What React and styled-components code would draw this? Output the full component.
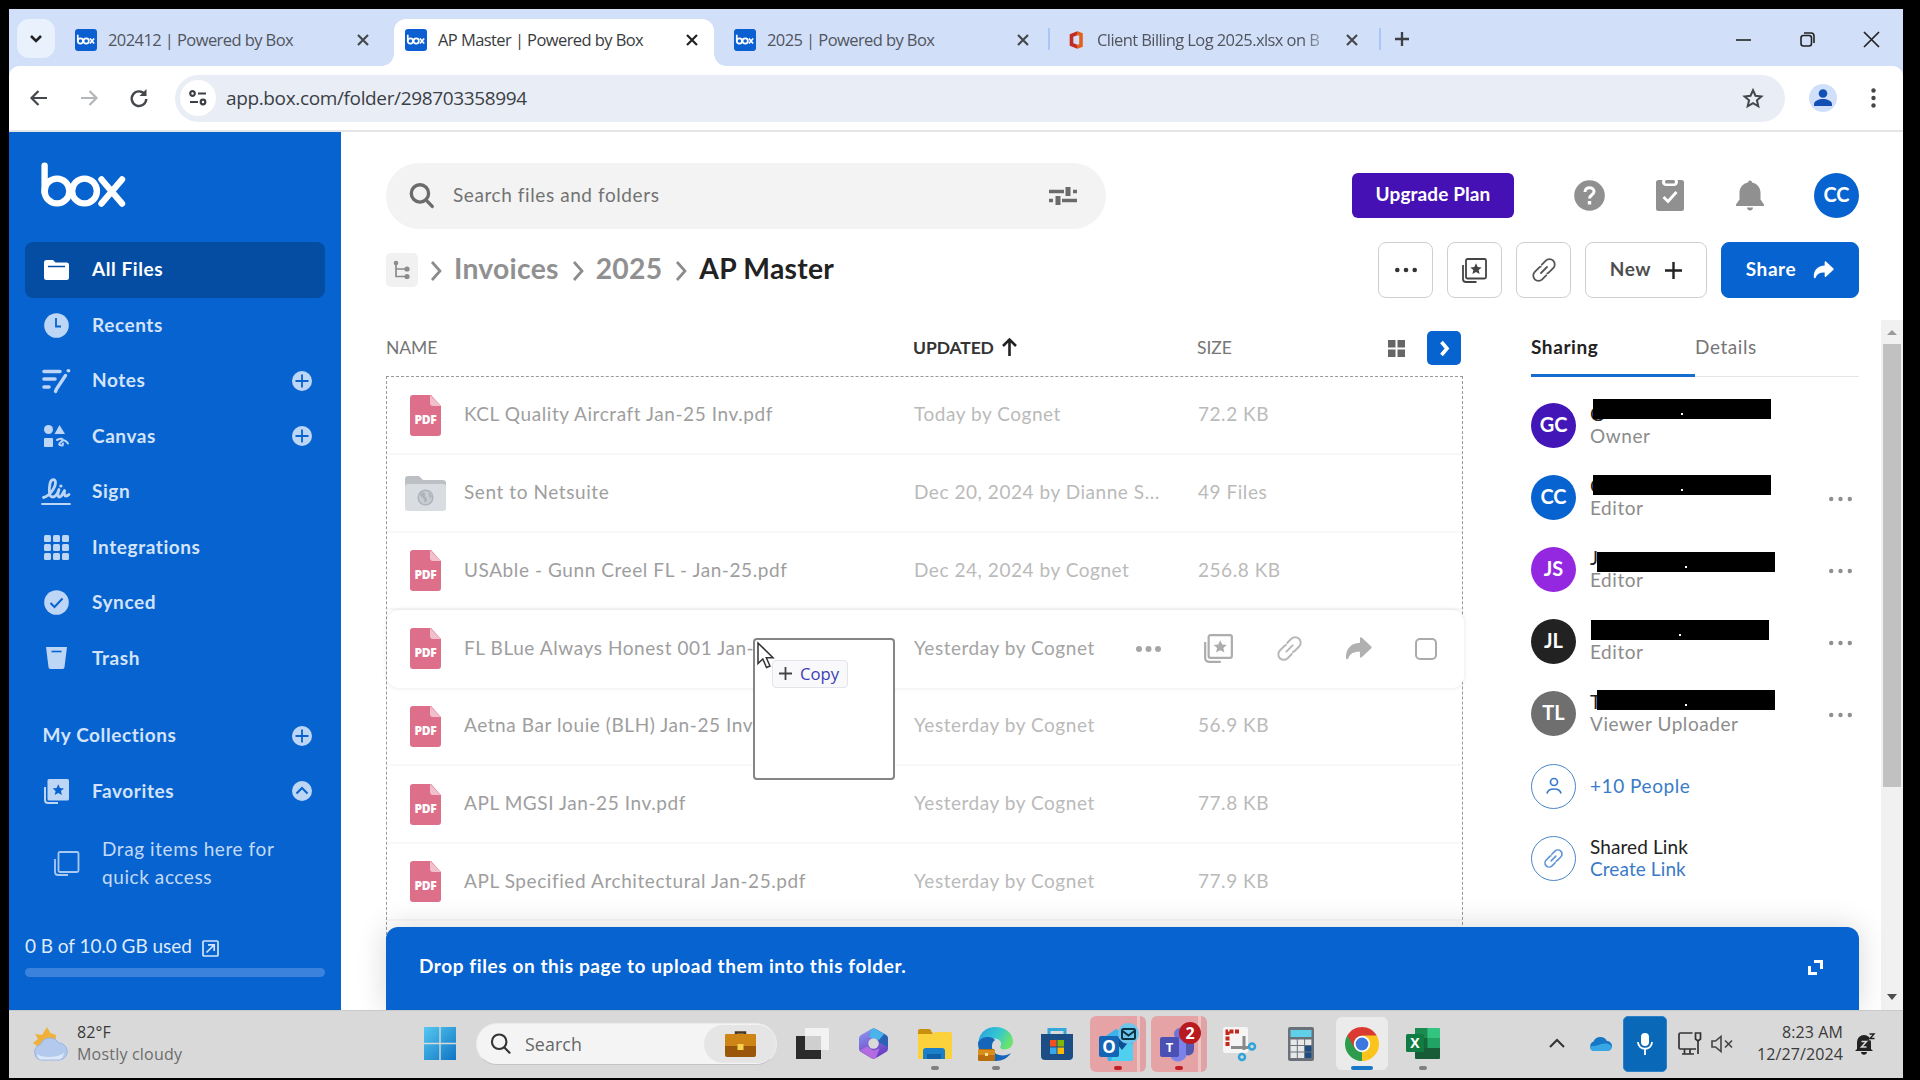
import React from 'react';
import styled, { createGlobalStyle, css } from 'styled-components';

const blue = '#0763cf';

const GlobalStyle = createGlobalStyle`
  * { box-sizing: border-box; }
  body { margin: 0; background: #000; overflow: hidden; }
  svg { display: block; flex: none; overflow: visible; }
`;

const Screen = styled.div`
  width: 1920px;
  height: 1080px;
  background: #000;
  padding: 9px 17px 2px 9px;
  display: flex;
  flex-direction: column;
  font-family: Lato, sans-serif;
  font-size: 19px;
  letter-spacing: 0.58px;
  color: #222;
  white-space: nowrap;
`;

/* ---------- browser chrome ---------- */
const TabStrip = styled.div`
  height: 57px;
  flex: none;
  background: #d2dff8;
  display: flex;
  align-items: flex-end;
  padding-left: 8px;
  font-family: 'Open Sans', sans-serif;
  font-size: 16.5px;
  letter-spacing: -0.58px;
`;
const TabSearch = styled.div`
  width: 38px;
  height: 39px;
  margin: 0 0 8px;
  border-radius: 12px;
  background: #e9f1fd;
  display: grid;
  place-items: center;
`;
const Tab = styled.div`
  position: relative;
  height: 47px;
  width: ${(p) => p.$w}px;
  margin-left: ${(p) => p.$gap || 0}px;
  padding: 0 ${(p) => p.$end || 17}px 6px 11px;
  display: flex;
  align-items: center;
  color: #50555e;
  ${(p) =>
    p.$active &&
    css`
      background: #fff;
      color: #3a3c40;
      border-radius: 12px 12px 0 0;
      &::before,
      &::after {
        content: '';
        position: absolute;
        bottom: 0;
        width: 12px;
        height: 12px;
      }
      &::before {
        left: -12px;
        background: radial-gradient(circle at 0 0, transparent 11.5px, #fff 12px);
      }
      &::after {
        right: -12px;
        background: radial-gradient(circle at 100% 0, transparent 11.5px, #fff 12px);
      }
    `}
`;
const TabTitle = styled.span`
  flex: 1;
  overflow: hidden;
  margin: 0 16px 0 ${(p) => (p.$fade ? 14 : 11)}px;
  ${(p) => p.$fade && css`mask-image: linear-gradient(90deg, #000 88%, transparent 101%);`}
`;
const TabRule = styled.i`
  width: 2px;
  height: 22px;
  margin-bottom: 16px;
  background: #a9c7f4;
`;
const NewTab = styled.div`
  margin: 0 0 20px 14px;
`;
const WindowButtons = styled.div`
  margin-left: auto;
  padding: 0 24px 19px 0;
  display: flex;
  gap: 49px;
`;
const Toolbar = styled.div`
  height: 66px;
  flex: none;
  background: #fff;
  border-bottom: 2px solid #e4e5e7;
  border-radius: 10px 10px 0 0;
  box-shadow: 0 -10px 0 #d2dff8;
  clip-path: inset(0);
  display: flex;
  align-items: center;
  padding: 0 27px 0 21px;
`;
const NavButtons = styled.div`
  display: flex;
  align-items: center;
  gap: 32px;
  width: 145px;
`;
const Omnibox = styled.div`
  width: 1610px;
  height: 47px;
  border-radius: 24px;
  background: #e9edf6;
  display: flex;
  align-items: center;
  padding: 0 21px 0 5px;
`;
const SiteInfo = styled.div`
  width: 36px;
  height: 36px;
  border-radius: 50%;
  background: #fff;
  display: grid;
  place-items: center;
`;
const Url = styled.span`
  flex: 1;
  margin-left: 10px;
  font: 19px 'Open Sans', sans-serif;
  letter-spacing: -0.36px;
  color: #3b3f45;
`;
const Profile = styled.div`
  width: 28px;
  height: 28px;
  border-radius: 50%;
  background: #d0e0fb;
  margin: 0 34px 0 24px;
  display: grid;
  place-items: center;
`;

/* ---------- box app ---------- */
const AppBody = styled.div`
  height: 878px;
  flex: none;
  display: flex;
  background: #fff;
`;
const Sidebar = styled.nav`
  width: 332px;
  flex: none;
  background: ${blue};
  padding: 30px 16px 0;
  color: #d3e4fa;
  font-weight: 700;
`;
const LogoWrap = styled.div`
  padding-left: 16px;
  margin-bottom: 35px;
`;
const NavItem = styled.div`
  height: 55.5px;
  display: flex;
  align-items: center;
  padding: 0 13px 0 ${(p) => (p.$heading ? 17.5 : 15)}px;
  margin-top: ${(p) => (p.$heading ? 22 : 0)}px;
  border-radius: 8px;
  background: ${(p) => (p.$active ? '#044da3' : 'transparent')};
  color: ${(p) => (p.$active ? '#fff' : 'inherit')};
`;
const NavIcon = styled.span`
  width: 32px;
  display: grid;
  place-items: center;
  margin-right: 20px;
`;
const NavLabel = styled.span`
  flex: 1;
  padding-bottom: 2.5px;
`;
const DragHint = styled.div`
  display: flex;
  align-items: center;
  gap: 22px;
  margin: 16px 0 0 29px;
  font-weight: 400;
  line-height: 28px;
  color: #c3daf7;
`;
const Storage = styled.div`
  display: flex;
  align-items: center;
  gap: 10px;
  height: 26px;
  margin-top: 43px;
  letter-spacing: -0.05px;
  font-weight: 400;
  color: #dfebfb;
`;
const StorageText = styled.span`
  padding-bottom: 3px;
`;
const StorageBar = styled.div`
  height: 9px;
  margin-top: 8px;
  border-radius: 5px;
  background: #3a82db;
`;

const Main = styled.main`
  position: relative;
  flex: 1;
  padding-left: 45px;
  display: flex;
  flex-direction: column;
  overflow: hidden;
`;
const Header = styled.header`
  height: 97px;
  flex: none;
  padding: 30px 44px 0 0;
  display: flex;
  align-items: center;
`;
const SearchPill = styled.div`
  width: 720px;
  height: 66px;
  border-radius: 33px;
  background: #f3f3f3;
  display: flex;
  align-items: center;
  padding: 0 29px 0 23px;
  gap: 19px;
  color: #727272;
`;
const SearchText = styled.span`
  flex: 1;
  padding-bottom: 3px;
`;
const Upgrade = styled.div`
  width: 162px;
  height: 45px;
  margin: 0 35px 0 auto;
  border-radius: 6px;
  background: #4511b5;
  color: #fff;
  font-weight: 700;
  letter-spacing: 0.1px;
  display: grid;
  place-items: center;
  padding-bottom: 5px;
`;
const HeaderIcon = styled.div`
  width: 80.5px;
  display: grid;
  place-items: center;
`;
const Avatar = styled.div`
  width: 45px;
  height: 45px;
  flex: none;
  border-radius: 50%;
  background: ${(p) => p.$bg || '#fff'};
  border: ${(p) => (p.$bg ? 'none' : '1.5px solid #4a84cc')};
  color: #fff;
  font-weight: 700;
  font-size: 20px;
  letter-spacing: 0;
  display: grid;
  place-items: center;
  padding-bottom: ${(p) => (p.$bg ? 3 : 0)}px;
  margin-left: ${(p) => p.$gap || 0}px;
`;
const TitleRow = styled.div`
  height: 91px;
  flex: none;
  padding: 13px 44px 22px 0;
  display: flex;
  align-items: center;
  gap: 14px;
`;
const Crumbs = styled.div`
  flex: 1;
  display: flex;
  align-items: center;
  gap: 12px;
  font-size: 28.3px;
  font-weight: 700;
  letter-spacing: 0.25px;
  color: #909090;
`;
const Crumb = styled.span`
  color: ${(p) => (p.$current ? '#222' : 'inherit')};
  padding: 0 1px 5px 0;
`;
const CrumbRoot = styled.div`
  width: 32px;
  height: 34px;
  border-radius: 5px;
  background: #f1f1f1;
  display: grid;
  place-items: center;
`;
const Button = styled.div`
  width: ${(p) => p.$w || 55}px;
  height: 56px;
  border-radius: 8px;
  border: 1.5px solid ${(p) => (p.$primary ? blue : '#cfcfcf')};
  background: ${(p) => (p.$primary ? blue : '#fff')};
  color: ${(p) => (p.$primary ? '#fff' : '#4e4e4e')};
  font-weight: 700;
  display: flex;
  align-items: center;
  justify-content: center;
  gap: ${(p) => (p.$primary ? 17 : 14)}px;
`;
const ButtonText = styled.span`
  padding-bottom: 3px;
`;
const Content = styled.div`
  flex: 1;
  display: flex;
  min-height: 0;
`;
const FileArea = styled.section`
  width: 1077px;
  flex: none;
`;
const ListHead = styled.div`
  height: 56px;
  padding-right: 1px;
  display: flex;
  align-items: center;
  font-size: 17.5px;
  letter-spacing: -0.1px;
  color: #767676;
`;
const HeadCell = styled.span`
  width: ${(p) => p.$w}px;
  padding-bottom: 1.5px;
  display: flex;
  align-items: center;
  gap: 8px;
  font-weight: ${(p) => (p.$sorted ? 700 : 400)};
  color: ${(p) => (p.$sorted ? '#333' : 'inherit')};
`;
const PanelToggle = styled.div`
  width: 34px;
  height: 34px;
  margin-left: 22px;
  border-radius: 5px;
  background: ${blue};
  display: grid;
  place-items: center;
`;
const FileList = styled.div`
  height: 634px;
  border: 1.5px dashed #999;
  border-bottom: none;
`;
const FileRow = styled.div`
  height: 77.75px;
  display: flex;
  align-items: center;
  padding: 1px 26px 0 18px;
  border-bottom: 2px solid #f8f8f8;
  color: #bababa;
  ${(p) =>
    p.$hover &&
    css`
      position: relative;
      margin-right: -2px;
      color: #a4a4a4;
      background: #fff;
      border-color: transparent;
      border-radius: 12px;
      box-shadow: 0 0 5px rgba(0, 0, 0, 0.11);
    `}
`;
const FileName = styled.div`
  width: 509px;
  flex: none;
  display: flex;
  align-items: center;
  gap: 18px;
  color: #9e9e9e;
`;
const CellText = styled.span`
  width: ${(p) => (p.$w ? `${p.$w}px` : 'auto')};
  flex: none;
  padding-bottom: 3px;
  letter-spacing: ${(p) => (p.$w || p.$size ? 0.54 : 0.58)}px;
`;
const FileIcon = styled.span`
  width: 41px;
  display: grid;
  place-items: center;
`;
const RowActions = styled.div`
  width: 301px;
  flex: none;
  display: flex;
  align-items: center;
  justify-content: space-between;
`;
const Checkbox = styled.i`
  width: 22px;
  height: 22px;
  border: 2.5px solid #ababab;
  border-radius: 5px;
`;

const Panel = styled.aside`
  width: 328px;
  flex: none;
  margin-left: 68px;
`;
const PanelTabs = styled.div`
  height: 57px;
  margin-bottom: 12px;
  display: flex;
  color: #767676;
`;
const PanelTab = styled.div`
  flex: 1;
  padding-top: 15px;
  border-bottom: ${(p) => (p.$active ? '3px solid #156dd0' : '1.5px solid #e5e5e5')};
  color: ${(p) => (p.$active ? '#222' : 'inherit')};
  font-weight: ${(p) => (p.$active ? 700 : 400)};
  margin-bottom: ${(p) => (p.$active ? 0 : 0.5)}px;
`;
const Person = styled.div`
  height: 72.2px;
  display: flex;
  align-items: center;
  gap: 14px;
  padding-right: 7px;
`;
const PersonText = styled.div`
  position: relative;
  flex: 1;
  line-height: 22px;
  padding-bottom: 1px;
  letter-spacing: ${(p) => (p.$tight ? 0.1 : 0.55)}px;
  color: #222;
`;
const Role = styled.div`
  color: ${(p) => (p.$link ? '#3a7bc8' : '#8c8c8c')};
`;
const PersonMenu = styled.span`
  padding-top: 3px;
`;
const Redaction = styled.div`
  position: absolute;
  left: ${(p) => p.$x}px;
  top: ${(p) => p.$y}px;
  width: 178px;
  height: 20px;
  background: #000;
  &::after {
    content: '';
    position: absolute;
    left: 88px;
    top: 14px;
    width: 2px;
    height: 2px;
    background: #fff;
  }
`;
const Scrollbar = styled.div`
  width: 22px;
  margin-left: auto;
  flex: none;
  background: #f1f1f1;
  display: flex;
  flex-direction: column;
  align-items: center;
  padding: 10px 0 10px;
`;
const Thumb = styled.div`
  width: 18px;
  height: 443px;
  margin: 9px 0 auto;
  background: #c1c1c1;
`;
const DropBanner = styled.div`
  position: absolute;
  left: 45px;
  right: 44px;
  bottom: 0;
  height: 83px;
  border-radius: 12px 12px 0 0;
  background: ${blue};
  box-shadow: 0 0 30px rgba(0, 0, 0, 0.16);
  color: #fff;
  font-weight: 700;
  letter-spacing: 0.59px;
  display: flex;
  align-items: center;
  justify-content: space-between;
  padding: 0 36px 3px 33px;
`;
const BannerText = styled.span`
  padding-bottom: 2.5px;
`;
const DragGhost = styled.div`
  position: absolute;
  left: 412px;
  top: 506px;
  width: 142px;
  height: 142px;
  border: 2px solid #858585;
  border-radius: 4px;
  background: #fff;
`;
const CopyChip = styled.div`
  position: absolute;
  left: 17px;
  top: 20px;
  width: 76px;
  height: 28px;
  border: 1.5px solid #e4e5ea;
  border-radius: 4px;
  background: #f9f9fc;
  display: flex;
  align-items: center;
  gap: 8px;
  padding: 0 0 2px 6px;
  font: 16.7px 'Open Sans', sans-serif;
  letter-spacing: 0;
  color: #3a41b4;
`;
const Pointer = styled.div`
  position: absolute;
  left: 2px;
  top: 2px;
`;

/* ---------- taskbar ---------- */
const Taskbar = styled.footer`
  height: 68px;
  flex: none;
  background: #d9d9d9;
  border-top: 1.5px solid #c9c9c9;
  display: flex;
  align-items: center;
  padding: 0 28px 2px 24px;
  font-family: 'Open Sans', sans-serif;
  font-size: 16px;
  letter-spacing: 0.1px;
  color: #3a3a3a;
`;
const Weather = styled.div`
  width: 391px;
  display: flex;
  align-items: center;
  gap: 10px;
  line-height: 22px;
`;
const WeatherText = styled.div`
  padding-bottom: 2px;
`;
const Muted = styled.div`
  color: #6c6c6c;
  letter-spacing: 0.2px;
`;
const TaskSearch = styled.div`
  width: 301px;
  height: 42px;
  margin: 0 5px 0 20px;
  border-radius: 21px;
  background: #f4f4f4;
  border: 1px solid #ebebeb;
  border-bottom-color: #c4c4c4;
  display: flex;
  align-items: center;
  gap: 14px;
  padding-left: 13px;
  font-size: 17.8px;
  color: #666;
`;
const SearchHighlight = styled.div`
  width: 72px;
  height: 38px;
  margin-left: auto;
  border-radius: 19px;
  background: #e5e5e5;
  display: grid;
  place-items: center;
`;
const AppSlot = styled.div`
  position: relative;
  width: 61.1px;
  height: 66px;
  flex: none;
  display: grid;
  place-items: center;
  &::after {
    content: '';
    display: ${(p) => (p.$mark ? 'block' : 'none')};
    position: absolute;
    left: 50%;
    bottom: 6.5px;
    width: ${(p) => (p.$mark === '#1877c8' ? 22 : 8)}px;
    height: 4px;
    border-radius: 2px;
    transform: translateX(-50%);
    background: ${(p) => p.$mark};
  }
`;
const Tile = styled.div`
  width: ${(p) => (p.$alert ? 56 : 52)}px;
  height: ${(p) => (p.$alert ? 56 : 53)}px;
  border-radius: 6px;
  background: ${(p) => (p.$alert ? 'linear-gradient(90deg, #e5a3a6 84%, #edc3c4 84%, #edc3c4 89%, #dfa3a5 89%)' : '#ebebeb')};
  display: grid;
  place-items: center;
`;
const Tray = styled.div`
  margin-left: auto;
  display: flex;
  align-items: center;
`;
const MicTile = styled.div`
  width: 44px;
  height: 56px;
  margin: 0 11px;
  border-radius: 5px;
  background: #0a68b8;
  border: 1.5px solid #2b80c6;
  display: grid;
  place-items: center;
`;
const Clock = styled.div`
  width: 86px;
  text-align: right;
  line-height: 22px;
  padding-bottom: 2px;
  margin: 0 12px 0 24px;
`;
const TrayItem = styled.span`
  margin-left: ${(p) => p.$gap}px;
`;

/* ---------- drawings ---------- */
const BoxLogo = ({ w = 85, h = 45, color = '#fff' }) => (
  <svg width={w} height={h} viewBox="0 0 85 45" preserveAspectRatio="none" fill="none" stroke={color} strokeWidth="6.4" strokeLinecap="round">
    <path d="M3.6 3.6V30" />
    <circle cx="16" cy="29" r="12.4" />
    <circle cx="43.5" cy="29" r="12.4" />
    <path d="M60.500 17.500 81 41.500M81 17.500 60.500 41.500" />
  </svg>
);
const Favicon = () => (
  <svg width="22" height="22">
    <rect width="22" height="22" rx="3" fill="#0b5fd0" />
    <svg x="2" y="5.500" width="18" height="10" viewBox="0 0 85 45" fill="none" stroke="#fff" strokeWidth="8">
      <path d="M3.6 0V30" /><circle cx="16" cy="29.500" r="12.400" /><circle cx="43.500" cy="29.500" r="12.400" /><path d="M61 17.500 81 41.500M81 17.500 61 41.500" />
    </svg>
  </svg>
);
const Cross = ({ s = 10, w = 2.2, color = '#45484d' }) => (
  <svg width={s} height={s} viewBox="0 0 10 10" stroke={color} strokeWidth={(w * 10) / s}><path d="M0 0 10 10M10 0 0 10" /></svg>
);
const Plus = ({ s = 14, w = 2, color = '#333' }) => (
  <svg width={s} height={s} stroke={color} strokeWidth={w}><path d={`M0 ${s / 2}H${s}M${s / 2} 0V${s}`} /></svg>
);
const Dots = ({ color, r = 2.5, w = 25 }) => (
  <svg width={w} height="8" fill={color}>
    <circle cx={r} cy="4" r={r} /><circle cx={w / 2} cy="4" r={r} /><circle cx={w - r} cy="4" r={r} />
  </svg>
);
const Star = ({ x = 0, y = 0, s = 1, fill }) => (
  <path transform={`translate(${x} ${y}) scale(${s})`} fill={fill} stroke="none" d="M0-6 1.8-2.1 6-1.7 2.8 1.1 3.8 5.3 0 3.1-3.8 5.3-2.8 1.1-6-1.7-1.8-2.1z" />
);
const Collection = ({ color, s = 25, w = 1.8 }) => (
  <svg width={s} height={s} viewBox="0 0 25 25" fill="none" stroke={color} strokeWidth={w}>
    <rect x="4" y="1" width="20" height="19.500" rx="1.500" />
    <path d="M1 7v14a3 3 0 0 0 3 3h10.500" />
    <Star x={14} y={11} s={0.95} fill={color} />
  </svg>
);
const Link = ({ color, s = 26, w = 2 }) => (
  <svg width={s} height={s} viewBox="0 0 24 24" fill="none" stroke={color} strokeWidth={w} strokeLinecap="round">
    <path d="M9.800 6.700l4-4a5 5 0 0 1 7.400 7.400l-4.300 4.300a4 4 0 0 1-1.600 1M14.200 17.300l-4 4a5 5 0 0 1-7.400-7.400l4.300-4.300a4 4 0 0 1 1.600-1M9 15l6-6" />
  </svg>
);
const ShareArrow = ({ color, s = 20 }) => (
  <svg width={s} height={s * 0.85} viewBox="0 0 27 23" fill={color}>
    <path d="M15 1.200c0-1 1-1.300 1.700-.6l9.600 9c.6.6.6 1.200 0 1.800l-9.600 9c-.7.7-1.700.3-1.700-.6v-5C9 14.500 5 16.500 3.200 21.500c-.4 1.300-2.200 1-2.200-.4C.4 12 6 6.200 15 5.800z" />
  </svg>
);
const Chevron = ({ color = '#8b8b8b' }) => (
  <svg width="12" height="19" fill="none" stroke={color} strokeWidth="2.700"><path d="M2 1l8 9L2 19" /></svg>
);
const Magnifier = ({ color, s = 24, w = 3.4 }) => (
  <svg width={s} height={s} viewBox="0 0 24 24" fill="none" stroke={color} strokeWidth={w} strokeLinecap="round">
    <circle cx="10.500" cy="10" r="8.300" /><path d="M16.500 16.500 22.300 22.500" />
  </svg>
);
const PlusCircle = () => (
  <svg width="20" height="20"><circle cx="10" cy="10" r="10" fill="#bdd6f5" /><path d="M3.500 10h13M10 3.500v13" stroke={blue} strokeWidth="1.800" /></svg>
);
const UpCircle = () => (
  <svg width="20" height="20"><circle cx="10" cy="10" r="10" fill="#bdd6f5" /><path d="M4.500 12.500 10 7l5.500 5.500" stroke={blue} strokeWidth="2" fill="none" /></svg>
);
const PdfLabel = styled.text`
  font: 800 12px 'Open Sans', sans-serif;
  letter-spacing: -0.3px;
  fill: #fff;
`;
const Pdf = () => (
  <svg width="31" height="41">
    <path d="M3 0h18l10 11v27a3 3 0 0 1-3 3H3a3 3 0 0 1-3-3V3a3 3 0 0 1 3-3z" fill="#dd6f8b" />
    <path d="M20 0v8a3 3 0 0 0 3 3h8z" fill="#f2c0cd" />
    <PdfLabel x="15.500" y="28.500" textAnchor="middle" textLength="22" lengthAdjust="spacingAndGlyphs">PDF</PdfLabel>
  </svg>
);
const Folder = () => (
  <svg width="41" height="35">
    <path d="M3 0h11l4 4h20a3 3 0 0 1 3 3v8H0V3a3 3 0 0 1 3-3z" fill="#bcc0c4" />
    <rect y="8" width="41" height="27" rx="3" fill="#d9dce0" />
    <circle cx="20.500" cy="21.500" r="7.300" fill="#c9cdd2" stroke="#aeb3b9" strokeWidth="1.500" />
    <path d="M15 18c3-3 6-2 5 1s3 2 2 5-3 3-3 0-4-2-4-6zM23 16l4 4-2 3z" fill="#aeb3b9" />
  </svg>
);

const light = '#bdd6f5';
const navIcons = {
  'All Files': (
    <svg width="25" height="20" fill="#fff"><path d="M2.500 0H9l2.500 2.500h11A2.500 2.500 0 0 1 25 5v12.500a2.500 2.500 0 0 1-2.500 2.500h-20A2.500 2.500 0 0 1 0 17.500v-15A2.500 2.500 0 0 1 2.500 0z" /><path d="M4 6.500h17" stroke="#044da3" strokeWidth="1.500" /></svg>
  ),
  Recents: (
    <svg width="25" height="25"><circle cx="12.500" cy="12.500" r="12.300" fill={light} /><path d="M12 5v8.500h5" fill="none" stroke={blue} strokeWidth="1.800" /></svg>
  ),
  Notes: (
    <svg width="28" height="24" stroke={light} strokeLinecap="round" fill="none">
      <path d="M2 2.500h16M2 10h11M2 18h5" strokeWidth="3.600" /><path d="M23.500 6.500 14.500 20l-1 2.500" strokeWidth="3.400" /><path d="M26.300 1.800h.3" strokeWidth="3.600" />
    </svg>
  ),
  Canvas: (
    <svg width="24" height="23" fill={light}>
      <circle cx="4.500" cy="4.500" r="4.500" /><path d="M15.500 0 21 9H10.500z" /><rect y="13" width="9" height="9" rx="1" />
      <path d="M13 15c4-2 8-1.500 4.500 1.500-3 2.500-3.500 4 1 4l.5-2M18 16c2-2 5 1 6 2.500" fill="none" stroke={light} strokeWidth="2" strokeLinecap="round" />
    </svg>
  ),
  Sign: (
    <svg width="28" height="27" fill="none" stroke={light} strokeWidth="2.800" strokeLinecap="round" strokeLinejoin="round">
      <path d="M1.500 19.500C7 18.500 13.500 10 13.500 4.500 13.500.5 9 .5 8 5.500c-1 5-1.500 13.500 2.500 13.500 3 0 5-3 6.500-7.500-1.500 4.500-1.500 7.500.5 7.500 2.500 0 3.500-4.500 5-6.500-.3 3-.3 5.500 1.500 5.500 1 0 2-.5 3-1.500" /><path d="M0 26h28" strokeWidth="1.800" /><path d="M18.800 8h.1" strokeWidth="3.200" />
    </svg>
  ),
  Integrations: (
    <svg width="25" height="25" fill={light}>{[0, 9, 18].map((x) => [0, 9, 18].map((y) => <rect key={`${x}${y}`} x={x} y={y} width="7" height="7" rx="1.500" />))}</svg>
  ),
  Synced: (
    <svg width="25" height="25"><circle cx="12.500" cy="12.500" r="12.300" fill={light} /><path d="M6.500 13l4 4L18.500 8.500" fill="none" stroke={blue} strokeWidth="2" /></svg>
  ),
  Trash: (
    <svg width="21" height="22"><path d="M0 0h21l-2.500 20a2 2 0 0 1-2 2H4.500a2 2 0 0 1-2-2z" fill={light} /><path d="M5.500 4.500h10" stroke={blue} strokeWidth="1.600" /></svg>
  ),
  Favorites: (
    <svg width="25" height="25"><rect x="3.500" width="21.500" height="21.500" rx="1.500" fill={light} /><path d="M1 8v13a3 3 0 0 0 3 3h10" fill="none" stroke={light} strokeWidth="2" /><Star x={14.3} y={11} s={0.95} fill={blue} /></svg>
  ),
};

const files = [
  ['KCL Quality Aircraft Jan-25 Inv.pdf', 'Today by Cognet', '72.2 KB'],
  ['Sent to Netsuite', 'Dec 20, 2024 by Dianne S...', '49 Files', 'folder'],
  ['USAble - Gunn Creel FL - Jan-25.pdf', 'Dec 24, 2024 by Cognet', '256.8 KB'],
  ['FL BLue Always Honest 001 Jan-', 'Yesterday by Cognet', null, 'hover'],
  ['Aetna Bar louie (BLH) Jan-25 Inv', 'Yesterday by Cognet', '56.9 KB'],
  ['APL MGSI Jan-25 Inv.pdf', 'Yesterday by Cognet', '77.8 KB'],
  ['APL Specified Architectural Jan-25.pdf', 'Yesterday by Cognet', '77.9 KB'],
];
const people = [
  ['GC', '#4316b8', 'G', 'Owner', 3, -4],
  ['CC', blue, 'C', 'Editor', 3, 0.5],
  ['JS', '#9428e0', 'J', 'Editor', 7, 5],
  ['JL', '#222', '', 'Editor', 1, 0.5],
  ['TL', '#6f6f6f', 'T', 'Viewer Uploader', 7, -1.5],
];

/* taskbar drawings */
const Sun = () => (
  <svg width="34" height="34">
    <path d="M14 0l3.500 6 5.500 2-1 14H8L0 16l5-4-3-5 7 1z" fill="#efb13b" />
    <path d="M8 33a8 8 0 0 1-.5-15.500 10 10 0 0 1 18-1.500A8.500 8.500 0 0 1 26 33z" fill="#b3c9ee" stroke="#9ab3e2" />
    <path d="M4 27c5 4 20 4 27-1-1 5-3 6.500-5 6.500H8c-2 0-3.500-2-4-5.500z" fill="#dbe7fa" />
  </svg>
);
const WindowsLogo = () => (
  <svg width="32" height="33"><defs><linearGradient id="win" x2="1" y2="1"><stop stopColor="#55c8f0" /><stop offset="1" stopColor="#0f74c4" /></linearGradient></defs>
    <path d="M0 0h15.300v15.700H0zM16.700 0H32v15.700H16.700zM0 17.300h15.300V33H0zM16.700 17.300H32V33H16.700z" fill="url(#win)" /></svg>
);
const Briefcase = () => (
  <svg width="31" height="26"><path d="M11 4V1.500h9V4" fill="none" stroke="#4a3620" strokeWidth="2.500" /><rect y="3" width="31" height="23" rx="2" fill="#9a560b" /><path d="M0 5a2 2 0 0 1 2-2h27a2 2 0 0 1 2 2v10H0z" fill="#cf8416" /><rect x="12.500" y="13" width="6" height="6" fill="#f8d24c" /></svg>
);
const TaskView = () => (
  <svg width="33" height="31"><path d="M0 8h9v14h16v9H0z" fill="#2b2b2b" /><rect x="9" width="24" height="22" rx="1" fill="#f4f4f4" opacity=".9" /><rect x="9" y="8" width="16" height="14" fill="#cfcfcf" /></svg>
);
const M365 = () => (
  <svg width="29" height="31"><defs><linearGradient id="ma" x2=".4" y2="1"><stop stopColor="#8f9df0" /><stop offset="1" stopColor="#6a3fc4" /></linearGradient></defs>
    <path d="M12 1.200a5 5 0 0 1 5 0L27 7a4 4 0 0 1 2 3.500v10a4 4 0 0 1-2 3.500l-10 6a5 5 0 0 1-5 0L2 24a4 4 0 0 1-2-3.500v-10A4 4 0 0 1 2 7z" fill="url(#ma)" />
    <path d="M14.500.5a5 5 0 0 1 2.500.7L27 7a4 4 0 0 1 2 3.500V19l-9-4.500-1-6.500-9-1.500z" fill="#2c62b4" /><path d="M12 1.200a5 5 0 0 1 5 0L25 6l-5 6-10-3z" fill="#48b4ea" /><path d="M1 22.500l7-4 6.500 4 6-2-3.500 9.500a5 5 0 0 1-5 0z" fill="#b36be0" /><circle cx="14.500" cy="15.500" r="5.200" fill="#d9d9d9" /></svg>
);
const Explorer = () => (
  <svg width="34" height="31"><path d="M0 3a2 2 0 0 1 2-2h10l3 5H0z" fill="#c9900e" /><path d="M0 6h14l3-2h15a2 2 0 0 1 2 2v25H0z" fill="#fbd23c" /><path d="M5 31V23a3 3 0 0 1 3-3h16a3 3 0 0 1 3 3v8z" fill="#1b7fc9" /><path d="M9 26h14v5H9z" fill="#0f62a8" /></svg>
);
const Edge = () => (
  <svg width="35" height="34"><defs><linearGradient id="ed" x2="1" y2=".4"><stop stopColor="#2a9be0" /><stop offset=".6" stopColor="#35c8cf" /><stop offset="1" stopColor="#6be36c" /></linearGradient></defs>
    <path d="M17.500 0C28 0 35 7 35 14.500c0 5-4 8-8.500 8-3.500 0-5-1.500-4-3 2-4-1-8-6-8C9 11.500 3 17 3 24 0 20-1 12 4 6 7 2 12 0 17.500 0z" fill="url(#ed)" /><path d="M0 16c2-7 14-8 17-3-5 3-4 13 4 15 5 1 9 0 12-2-3 5-9 8-15 8C8 34 0 27 0 16z" fill="#1565b8" /><rect y="22" width="17" height="12" rx="1.500" fill="#b86e0f" /><path d="M0 23h17v5H0z" fill="#da8f1d" /><rect x="7" y="26" width="3" height="3" fill="#fbe08a" /></svg>
);
const Store = () => (
  <svg width="32" height="33"><path d="M8 8V2.500h16V8" fill="none" stroke="#35a7d8" strokeWidth="3" /><path d="M0 7h32v22a4 4 0 0 1-4 4H4a4 4 0 0 1-4-4z" fill="#1d4d85" /><path d="M9 13h6.500v6.500H9z" fill="#f25022" /><path d="M16.500 13H23v6.500h-6.500z" fill="#7fba00" /><path d="M9 20.500h6.500V27H9z" fill="#36a9ee" /><path d="M16.500 20.500H23V27h-6.500z" fill="#ffb900" /></svg>
);
const AppLetter = styled.text`
  font: 700 ${(p) => p.$s}px 'Open Sans', sans-serif;
  letter-spacing: 0;
  fill: #fff;
`;
const Outlook = () => (
  <svg width="39" height="40"><path d="M4 14 17 5l17 9v20a3 3 0 0 1-3 3H9z" fill="#39b3ea" /><path d="M18 20h16v14a3 3 0 0 1-3 3H12z" fill="#4fd0f0" /><path d="M14 15h18l-9 11z" fill="#0f4f94" /><rect y="12" width="20" height="21" rx="2" fill="#1465b5" /><AppLetter $s={17} x="10" y="28.500" textAnchor="middle">O</AppLetter><circle cx="29.500" cy="9.500" r="10.500" fill="#6cc5ea" /><rect x="23" y="5" width="13" height="10" rx="1.500" fill="none" stroke="#0a3346" strokeWidth="2" /><path d="M23.500 7l6 4.500 6-4.500" fill="none" stroke="#0a3346" strokeWidth="2" /></svg>
);
const Teams = () => (
  <svg width="38" height="40"><circle cx="20" cy="10" r="6" fill="#6e74d6" /><path d="M11 15h16v14a9 9 0 0 1-16 5z" fill="#7b83eb" /><path d="M26 15h8v11a6 6 0 0 1-8 5z" fill="#5558af" /><rect y="13" width="19" height="20" rx="2" fill="#4b50b5" /><AppLetter $s={13} x="9.500" y="27.500" textAnchor="middle">T</AppLetter><circle cx="30" cy="9" r="11" fill="#b81a20" /><AppLetter $s={16} x="30" y="15" textAnchor="middle">2</AppLetter></svg>
);
const Snip = () => (
  <svg width="34" height="34" fill="none"><rect width="25" height="26" rx="2" fill="#f7f4f4" /><path d="M16 4.500H4.500V20" stroke="#c02a1c" strokeWidth="4" strokeDasharray="4 1.500" /><path d="M21 9v14M8 20.500h17" stroke="#8a8a8a" strokeWidth="3" /><circle cx="29" cy="19.500" r="3" stroke="#2fa3dc" strokeWidth="2.500" /><circle cx="19" cy="30" r="3" stroke="#2fa3dc" strokeWidth="2.500" /></svg>
);
const Calculator = () => (
  <svg width="26" height="34"><rect width="26" height="34" rx="2" fill="#6b7178" /><rect x="2.500" y="3" width="21" height="7" fill="#5fd0e8" />{[0, 1, 2].map((r) => [0, 1, 2].map((c) => <rect key={`${r}${c}`} x={2.5 + c * 7.3} y={12.5 + r * 6.5} width="6.300" height="5.500" fill={c === 2 && r > 0 ? '#1b4d84' : '#e6e8ea'} />))}</svg>
);
const Chrome = () => (
  <svg width="34" height="34" viewBox="-17 -17 34 34"><path d="M0 0-14.700-8.500A17 17 0 0 1 14.700-8.500z" fill="#da3a2f" /><path d="M0 0 14.700-8.500A17 17 0 0 1 0 17z" fill="#fbc41d" /><path d="M0 0 0 17A17 17 0 0 1-14.700-8.500z" fill="#2d9c4c" /><path d="M0-8.500H14.700L6 4z" fill="#fbc41d" /><path d="M-14.700-8.500-7.400 4.200 0 0V-8.500z" fill="#da3a2f" /><path d="M-14.700-8.500-16 0-7.400 4.200z" fill="#2d9c4c" /><path d="M0 17 7.400 4.200 0 5z" fill="#fbc41d" /><circle r="8.200" fill="#fff" /><circle r="6.400" fill="#3c78e0" /></svg>
);
const Excel = () => (
  <svg width="34" height="31"><rect x="9" width="25" height="31" rx="1.500" fill="#21a366" /><path d="M9 0h12.500v10H9z" fill="#1d8a50" /><path d="M21.500 0H32.500A1.500 1.500 0 0 1 34 1.500V10H21.500z" fill="#33c481" /><path d="M9 20h25v9.500a1.500 1.500 0 0 1-1.500 1.500H10.500A1.500 1.500 0 0 1 9 29.500z" fill="#185c37" /><path d="M9 10h12.500v10H9z" fill="#13693c" /><rect y="6" width="18" height="18" rx="1.500" fill="#107c41" /><AppLetter $s={14} x="9" y="20" textAnchor="middle">X</AppLetter></svg>
);
const Cloud = () => (
  <svg width="23" height="15"><path d="M5 15a5 5 0 0 1-.5-9.500A7.500 7.500 0 0 1 18 5a5 5 0 0 1 0 10z" fill="#1577c6" /><path d="M4 15c-4-1-3-5 0-5 5 0 8-3 12-2.500 4 0 7 2 6.500 4.500-.3 2-2 3-4.500 3z" fill="#39a7e6" /></svg>
);

const apps = [
  [<TaskView />], [<M365 />], [<Explorer />, '#808080'], [<Edge />, '#808080'], [<Store />],
  [<Tile $alert><Outlook /></Tile>, '#c21f26'], [<Tile $alert><Teams /></Tile>, '#c21f26'],
  [<Snip />], [<Calculator />], [<Tile><Chrome /></Tile>, '#1877c8'], [<Excel />, '#808080'],
];

export default function App() {
  return (
    <Screen>
      <GlobalStyle />
      <TabStrip>
        <TabSearch><svg width="10" height="7" fill="none" stroke="#222" strokeWidth="2.600"><path d="M0 1l5 5 5-5" /></svg></TabSearch>
        <Tab $w={330} $gap={9} $end={26}><Favicon /><TabTitle>202412 | Powered by Box</TabTitle><Cross /></Tab>
        <Tab $w={320} $active><Favicon /><TabTitle>AP Master | Powered by Box</TabTitle><Cross color="#222" /></Tab>
        <Tab $w={325} $gap={9} $end={20}><Favicon /><TabTitle>2025 | Powered by Box</TabTitle><Cross /></Tab>
        <TabRule />
        <Tab $w={321} $gap={8} $end={22}>
          <svg width="14" height="18" fill="none" strokeWidth="3.600"><path d="M9 2 2.500 4.500v9L9 16" stroke="#c22b23" /><path d="M8 2l4 1.500v11L8 16" stroke="#e2611f" /></svg>
          <TabTitle $fade>Client Billing Log 2025.xlsx on B</TabTitle><Cross />
        </Tab>
        <TabRule />
        <NewTab><Plus color="#3c3f44" w={2.3} /></NewTab>
        <WindowButtons>
          <svg width="15" height="15" stroke="#222" strokeWidth="1.600"><path d="M0 8h15" /></svg>
          <svg width="15" height="15" fill="none" stroke="#222" strokeWidth="1.600"><rect x="1" y="3.500" width="10.500" height="10.500" rx="2.500" /><path d="M4 1h7a3 3 0 0 1 3 3v7" /></svg>
          <Cross s={15} w={1.7} color="#222" />
        </WindowButtons>
      </TabStrip>
      <Toolbar>
        <NavButtons>
          <svg width="18" height="16" fill="none" stroke="#44474c" strokeWidth="2.200"><path d="M17 8H2M8.500 1l-7 7 7 7" /></svg>
          <svg width="18" height="16" fill="none" stroke="#b4b6b9" strokeWidth="2.200"><path d="M1 8h15M9.500 1l7 7-7 7" /></svg>
          <svg width="18" height="18" fill="none" stroke="#44474c" strokeWidth="2.400"><path d="M15 5.500A7.300 7.300 0 1 0 16.300 10" /><path d="M16.500 0v7h-7z" fill="#44474c" stroke="none" /></svg>
        </NavButtons>
        <Omnibox>
          <SiteInfo><svg width="18" height="16" fill="none" stroke="#3c3f44" strokeWidth="2.200"><circle cx="3.500" cy="3.500" r="2.300" /><path d="M9 3.500h8M1 12h8" /><circle cx="14" cy="12" r="2.300" /></svg></SiteInfo>
          <Url>app.box.com/folder/298703358994</Url>
          <svg width="22" height="21" viewBox="0 0 24 23" fill="none" stroke="#44474c" strokeWidth="2.200"><path d="M12 2.500l2.700 6 6.500.7-4.900 4.300 1.500 6.500L12 16.600 6.200 20l1.500-6.500L2.800 9.200l6.500-.7z" /></svg>
        </Omnibox>
        <Profile><svg width="18" height="18" fill="#1350b4"><circle cx="9" cy="4.500" r="4.300" /><path d="M0 17v-2c0-3 5-5 9-5s9 2 9 5v2z" /></svg></Profile>
        <svg width="5" height="20" fill="#44474c"><circle cx="2.500" cy="2.500" r="2.200" /><circle cx="2.500" cy="10" r="2.200" /><circle cx="2.500" cy="17.500" r="2.200" /></svg>
      </Toolbar>

      <AppBody>
        <Sidebar>
          <LogoWrap><BoxLogo /></LogoWrap>
          {['All Files', 'Recents', 'Notes', 'Canvas', 'Sign', 'Integrations', 'Synced', 'Trash'].map((n) => (
            <NavItem key={n} $active={n === 'All Files'}>
              <NavIcon>{navIcons[n]}</NavIcon>
              <NavLabel>{n}</NavLabel>
              {(n === 'Notes' || n === 'Canvas') && <PlusCircle />}
            </NavItem>
          ))}
          <NavItem $heading><NavLabel>My Collections</NavLabel><PlusCircle /></NavItem>
          <NavItem><NavIcon>{navIcons.Favorites}</NavIcon><NavLabel>Favorites</NavLabel><UpCircle /></NavItem>
          <DragHint>
            <svg width="26" height="25" fill="none" stroke="#a9c9f1" strokeWidth="1.800"><rect x="4.500" y="1" width="20" height="20" rx="1.500" /><path d="M1 8v13a3 3 0 0 0 3 3h10" /></svg>
            <span>Drag items here for<br />quick access</span>
          </DragHint>
          <Storage>
            <StorageText>0 B of 10.0 GB used</StorageText>
            <svg width="17" height="17" fill="none" stroke="#d3e4fa" strokeWidth="1.700"><rect x="1" y="2" width="15" height="15" rx="1" /><path d="M4.500 13.500l7-7M6 5.800h6.200V12" /></svg>
          </Storage>
          <StorageBar />
        </Sidebar>

        <Main>
          <Header>
            <SearchPill>
              <Magnifier color="#6b6b6b" s={25} w={3.2} />
              <SearchText>Search files and folders</SearchText>
              <svg width="28" height="18" stroke="#6b6b6b" strokeWidth="3.600"><path d="M0 4.500h15M24 4.500h4M0 13.500h4M13 13.500h15" /><path d="M19 0v9M9 9v9" strokeWidth="5" strokeLinecap="butt" /></svg>
            </SearchPill>
            <Upgrade>Upgrade Plan</Upgrade>
            <HeaderIcon><svg width="31" height="31" fill="none"><circle cx="15.500" cy="15.500" r="15.300" fill="#909090" /><path d="M11 12c0-6 9-5.500 9-.5 0 3.500-4.500 3.500-4.500 7" stroke="#fff" strokeWidth="3" /><path d="M15.500 21v3.500" stroke="#fff" strokeWidth="3.400" /></svg></HeaderIcon>
            <HeaderIcon><svg width="28" height="31" fill="none"><path d="M2.500 0h4a4 4 0 0 0 4 6h7a4 4 0 0 0 4-6h4A2.500 2.500 0 0 1 28 2.500v26a2.500 2.500 0 0 1-2.500 2.500h-23A2.500 2.500 0 0 1 0 28.500v-26A2.500 2.500 0 0 1 2.500 0z" fill="#909090" /><rect x="9" y="0" width="10" height="3.500" rx="1.500" fill="#909090" /><path d="M7.500 17l4.500 4.500L20.500 12" stroke="#fff" strokeWidth="2.800" /></svg></HeaderIcon>
            <HeaderIcon><svg width="28" height="31" fill="#909090"><path d="M12 2.500a2 2 0 0 1 4 0c5 1 8.500 5 8.500 10v7L28 24.500V26H0v-1.500l3.500-5v-7c0-5 3.500-9 8.500-10zM11 27.500h6c0 4-6 4-6 0z" /></svg></HeaderIcon>
            <Avatar $bg={blue} $gap={23.5}>CC</Avatar>
          </Header>
          <TitleRow>
            <Crumbs>
              <CrumbRoot><svg width="18" height="20" fill="none" stroke="#8b8b8b" strokeWidth="1.700"><path d="M3 3v13.500h10M3 9h10" /><circle cx="3" cy="3" r="2.300" fill="#8b8b8b" stroke="none" /><circle cx="14" cy="9" r="2.600" fill="#8b8b8b" stroke="none" /><circle cx="14" cy="16.500" r="2.600" fill="#8b8b8b" stroke="none" /></svg></CrumbRoot>
              <Chevron /><Crumb>Invoices</Crumb><Chevron /><Crumb>2025</Crumb><Chevron /><Crumb $current>AP Master</Crumb>
            </Crumbs>
            <Button><Dots color="#333" r={2.3} w={22} /></Button>
            <Button><Collection color="#444" /></Button>
            <Button><Link color="#555" s={24} w={1.8} /></Button>
            <Button $w={122}><ButtonText>New</ButtonText><Plus s={17} w={2.4} color="#222" /></Button>
            <Button $w={138} $primary><ButtonText>Share</ButtonText><ShareArrow color="#fff" s={21} /></Button>
          </TitleRow>
          <Content>
            <FileArea>
              <ListHead>
                <HeadCell $w={527}>NAME</HeadCell>
                <HeadCell $w={284} $sorted>UPDATED<svg width="15" height="18" fill="none" stroke="#222" strokeWidth="2.600"><path d="M7.500 18V2M1 8l6.500-6.500L14 8" /></svg></HeadCell>
                <HeadCell $w={191}>SIZE</HeadCell>
                <svg width="17" height="17" fill="#666"><path d="M0 0h7.500v7.500H0zM9.500 0H17v7.500H9.500zM0 9.500h7.500V17H0zM9.500 9.500H17V17H9.500z" /></svg>
                <PanelToggle><svg width="9" height="15" fill="none" stroke="#fff" strokeWidth="3.600"><path d="M1.500 1l5.500 6.500L1.500 14" /></svg></PanelToggle>
              </ListHead>
              <FileList>
                {files.map(([name, upd, size, kind]) => (
                  <FileRow key={name} $hover={kind === 'hover'}>
                    <FileName><FileIcon>{kind === 'folder' ? <Folder /> : <Pdf />}</FileIcon><CellText>{name}</CellText></FileName>
                    <CellText $w={kind === 'hover' ? 222 : 284}>{upd}</CellText>
                    {kind === 'hover' ? (
                      <RowActions>
                        <Dots color="#a6a6a6" r={3} />
                        <Collection color="#adadad" s={29} w={1.9} />
                        <Link color="#b8b8b8" s={25} w={1.9} />
                        <ShareArrow color="#b0b0b0" s={27} />
                        <Checkbox />
                      </RowActions>
                    ) : <CellText $size>{size}</CellText>}
                  </FileRow>
                ))}
              </FileList>
            </FileArea>
            <Panel>
              <PanelTabs><PanelTab $active>Sharing</PanelTab><PanelTab>Details</PanelTab></PanelTabs>
              {people.map(([ini, bg, first, role, x, y]) => (
                <Person key={ini}>
                  <Avatar $bg={bg}>{ini}</Avatar>
                  <PersonText>{first || '\u00a0'}<Role>{role}</Role><Redaction $x={x} $y={y} /></PersonText>
                  {ini !== 'GC' && <PersonMenu><Dots color="#8f8f8f" r={2.2} w={23} /></PersonMenu>}
                </Person>
              ))}
              <Person>
                <Avatar><svg width="16" height="16" fill="none" stroke="#3a7bc8" strokeWidth="1.700"><circle cx="8" cy="4" r="3.500" /><path d="M1 15.500c1-6 13-6 14 0" /></svg></Avatar>
                <PersonText><Role $link>+10 People</Role></PersonText>
              </Person>
              <Person>
                <Avatar><Link color="#5d93d6" s={19} w={2} /></Avatar>
                <PersonText $tight>Shared Link<Role $link>Create Link</Role></PersonText>
              </Person>
            </Panel>
            <Scrollbar>
              <svg width="10" height="5"><path d="M0 5 5 0l5 5z" fill="#9a9a9a" /></svg>
              <Thumb />
              <svg width="10" height="6"><path d="M0 0h10L5 6z" fill="#4e4e4e" /></svg>
            </Scrollbar>
          </Content>
          <DropBanner>
            <BannerText>Drop files on this page to upload them into this folder.</BannerText>
            <svg width="15" height="15" fill="none" stroke="#fff" strokeWidth="3"><path d="M6 1.500h7.500V9M1.500 6v7.500H9" /></svg>
          </DropBanner>
          <DragGhost>
            <CopyChip><Plus s={13} w={1.8} color="#444" />Copy</CopyChip>
            <Pointer><svg width="17" height="27"><path d="M1 1v20.500l4.800-4.500 3.700 8.500 3.500-1.500-3.700-8.300H16z" fill="#fff" stroke="#333" strokeWidth="1.500" /></svg></Pointer>
          </DragGhost>
        </Main>
      </AppBody>

      <Taskbar>
        <Weather><Sun /><WeatherText>82°F<Muted>Mostly cloudy</Muted></WeatherText></Weather>
        <WindowsLogo />
        <TaskSearch>
          <Magnifier color="#333" s={21} w={2.4} />Search
          <SearchHighlight><Briefcase /></SearchHighlight>
        </TaskSearch>
        {apps.map(([icon, mark], i) => <AppSlot key={i} $mark={mark}>{icon}</AppSlot>)}
        <Tray>
          <svg width="16" height="9" fill="none" stroke="#333" strokeWidth="2"><path d="M1 8l7-7 7 7" /></svg>
          <TrayItem $gap={24}><Cloud /></TrayItem>
          <MicTile><svg width="16" height="22" fill="none" stroke="#fff" strokeWidth="1.800"><rect x="4" y="0" width="8" height="13" rx="4" fill="#fff" stroke="none" /><path d="M1 9c0 9 14 9 14 0M8 16v6" /></svg></MicTile>
          <svg width="23" height="23" fill="none" stroke="#333" strokeWidth="1.700"><path d="M14.500 1H2.500A1.500 1.500 0 0 0 1 2.500v13A1.500 1.500 0 0 0 2.500 17H18M6.500 17v5M12 17v5M4 22h12M20 9v13" /><path d="M17.500 1h5v6l-2.500 2-2.500-2z" /></svg>
          <TrayItem $gap={10}><svg width="22" height="18" fill="none" stroke="#444" strokeWidth="1.600"><path d="M1 6h3.500L10 1.500v15L4.500 12H1zM14 5.500l7 7M21 5.500l-7 7" /></svg></TrayItem>
          <Clock>8:23 AM<br />12/27/2024</Clock>
          <svg width="20" height="22"><path d="M2 16V9a7 7 0 0 1 14 0v7l2 2H0zM6 19h6c0 3.500-6 3.500-6 0z" fill="#222" /><path d="M6.500 8.500h5l-5 5.500h5M15 1.500h4.500L15 6.500h4.500" fill="none" stroke="#d9d9d9" strokeWidth="1.500" /><path d="M14.500 1h4.500l-4 4.500h4.500" fill="none" stroke="#222" strokeWidth="1.400" /></svg>
        </Tray>
      </Taskbar>
    </Screen>
  );
}
